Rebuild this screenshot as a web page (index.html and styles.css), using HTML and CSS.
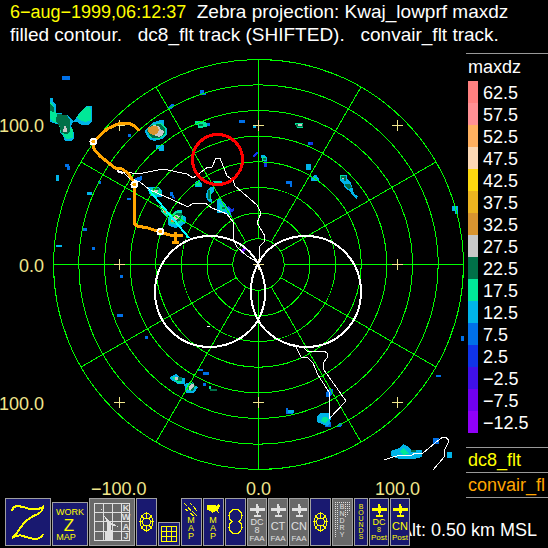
FILE: index.html
```html
<!DOCTYPE html>
<html lang="en">
<head>
  <meta charset="UTF-8">
  <title>Zebra projection</title>
  <link rel="stylesheet" href="styles.css">
</head>
<body>
  <header class="title">
    <p><time class="date">6−aug−1999,06:12:37</time>  Zebra projection: Kwaj_lowprf maxdz</p>
    <p>filled contour.   dc8_flt track (SHIFTED).   convair_flt track.</p>
  </header>

  <main class="display">
    <svg class="plot" viewBox="0 46 466 452">
      <!-- radar echoes -->
      <g class="echo">
        <path class="c7" d="M62 76h8v4h-8z M168 107l3-3h3v3l-3 2h-3z M128 134h3v3h-3z M65 164h4v2h1v4h-3v-3h-2z M98 181h3v3h-3z M127 198h4v2h-4z M82 228h5v3h-5z M92 247h3v3h-3z M135 178l3-1 4-1v3l-3 3-4 1z M170 192h3v3h1v3h-2v-2h-2z M200 90h4v3h2v2h-6z M239 120h6v3h-6z M205 123h5v3h-5z M308 142h5v3h-5z M286 181h6v6h-2v-3h-4z M461 336h3v5h-3z M436 375h5v2h-5z M433 438h6v6h-6z M145 336h3v3h-3z M198 369h5v2h-5z M203 372h6v3h-6z M203 383h3v3h-3z M120 275h3v3h-3z M117 314h6v3h-6z M337 425l3-2h2v3l-2 1h-3z M326 393l3-4h4v4l-4 4h-3z M286 408h2v3h5v3h-7z M311 177h3v-2h3v3h2v3h-8z M327 422h4v5h-6v-3z"/>
        <path class="c2" d="M253 156l2-3 4-2v2l-4 3-1 2z M264 159h3v8h-3z M310 142h3v3h-3z M228 206l3 3 3-1v3l-3 1 1 5-3-2z M174 197h1v2h-1z"/>
        <path class="c12" d="M50 98h3v4l3 2v9h6v3l5-1 4 4 2 2 3-3 4-6 6-6h6v16l-4 3h-6l-5-3h-4l-2 4 3 7v5l-2 3h-7l-2-5-3-4v-7l-10-3z M145 131l4-5 5-4 7-2h3v6l3 2v7l-5 4-8 2-5-2-3-5z M156 145h8v6h-5v-2h-3z M56 175h3v6h-3z M87 192h5v3h-5z M56 245h6v2h-6z M253 125h3v3h-3z M148 187h10l4 4v6h-8l-5-3z M168 217l4-3 6-4h4v5l4 2v6l-5 3-6 2-7-3z M195 182l4-2 3 4v3h-7z M213 181h9v4h-6z M207 190l3-3h4v4l-3 4 1 8-3-1-3-5z M217 199h3l6 6 4 5 1 6-5-3h-9z M261 155h3l3 3v3h-5z M306 164h5v6h-5z M311 178l4-3 4 3v3h-8z M341 175h6v4l4 4 2 6 1 5 4 2-1 3-5-4-1-3-6-4-2-5-3-2z M452 206h6v8h-3v-3h-3z M447 452h5v6h-5z M391 451l8-3 4-4 4 2 4 4h11v7l-8 2h-15l-8-3z M170 377l6-3 4 4h5v6h-7l-8-5z M184 384l6-2 3 2 5 3-2 3-2 3h-8z M317 417l3-4h9l2 4-1 6-3 3-10-4z M288 410h6v3h-6z"/>
        <path class="c17" d="M50 102l3 2 2 8 5 5v7l-7-2-3-4z M77 117l6-8 6-3 2 4v10l-6 2-6-2z M59 122l14 7v9l-7 1-6-8z M195 121h8l4 2v4l-9 1v-3h-3z M147 130l5-6 9-1 5 5v7l-7 4-9-1z M151 188h9l1 6-7 1z M159 205l5 3 4 6-1 4-5-5z M169 217l6-6h6l2 5v5l-6 4-8-2z M295 123h8v5h-6v-3h-2z M196 183h4v3h-4z M214 181h6v2h-6z M208 194l3-4v11l-3-3z M262 157h4v4h-4z M340 175h4v4h-4z M400 451l3-3 4 3 2 3-6 1z M171 377h5v3h5v3h-4z M187 385l6-3 3 5-5 4-4-1z M323 417h4l2 3-4 3-4-2z M209 386h2v3h-2z M219 203l4 3 1 4-3 1z"/>
        <path class="c22" d="M50 104l4 3v5l-4-1z M57 114l10 1 3 5v11l-3 3-6-1-1-6-4-6z M147 131l4-6 9-1 5 5v5l-6 4h-7z M153 188h6v2h-6z M171 218l6-5h5l-1 7-5 3-5-1z M199 124h4v2h-4z M296 124h7v3h-7z M208 190h2v9h-2z M341 176h5v5h-2v-2h-3z M345 184h5l2 4-4 1-3-3z M177 377h5v4h-5z M188 386l5-3 2 3-2 5-5-1z M210 389h7v2h-7z M263 158h3v2h-3z M160 207h3l3 5h-3z M411 450h5v2h-5z M222 207h3v2h-3z"/>
        <path class="c27" d="M64 126h2v2h1v4h-4v-3h1z M149 128l5-3 6 2 1 3 3 1-1 4-4 2-6-2z M152 190h6v2h-6z M161 207h2l4 7-3-1z M171 219l5-4 4 1-3 4-6 2z M298 124h4v2h-4z M175 377h3v3h-3z M189 387l2-3h3v2l-3 4h-2z M342 178h2v1h-2z"/>
        <path class="c32" d="M148 127l5-1h4l2 4-2 4-4 1-5-3z M171 220h3v2h-3z M164 210h2v3h-2z"/>
        <path class="c-7" d="M241 251l3-4 3 1-3 4-3 1z"/>
      </g>

      <!-- range rings and spokes -->
      <g class="rings">
        <circle cx="258.500" cy="264.500" r="25.700"/>
        <circle cx="258.500" cy="264.500" r="51.400"/>
        <circle cx="258.500" cy="264.500" r="77"/>
        <circle cx="258.500" cy="264.500" r="102.700"/>
        <circle cx="258.500" cy="264.500" r="128.300"/>
        <circle cx="258.500" cy="264.500" r="154"/>
        <circle cx="258.500" cy="264.500" r="179.700"/>
        <circle cx="258.500" cy="264.500" r="205"/>
        <path d="M258.500 59v180M258.500 290v179M53 264.500h180M284 264.500h180"/>
        <path d="M271 242.500L361 87M280.500 251.500L436 162M280.500 277.500L436 367M271 286.500L361 442M246 286.500L156 442M236.500 277.500L81 367M236.500 251.500L81 162M246 242.500L156 87"/>
      </g>

      <g class="marks">
        <path d="M114 125.500h11M119.500 120v11M253 125.500h11M258.500 120v11M392 125.500h11M397.500 120v11"/>
        <path d="M114 264.500h11M119.500 259v11M253 264.500h11M258.500 259v11M392 264.500h11M397.500 259v11"/>
        <path d="M114 402.500h11M119.500 397v11M253 402.500h11M258.500 397v11M392 402.500h11M397.500 397v11"/>
      </g>

      <!-- dc8 track -->
      <g class="dc8">
        <path d="M117 170l3 2 12 1h11l20-4 24 5 6 4 7-5 8-6h4l4-9h4l7 18 6 4 2 6 22 19 4 8-4 10 8 13-1 6-5 5v16"/>
        <path d="M123 172l6 6 11 4 10 8 23 10 15 7 5-4h12l7 5 15 6 6 8v16l4 9 10 9 12 7"/>
        <path d="M294 344l3 5 4 8 7 1 5 5 5 12 11 17v27l17-18-22-31-1-7 4-5v-5l-3-2h-17l-4-4"/>
        <path d="M384 460l6-2 10-3 11 1 4-3h8l12-10 8-6h3l3 4-5 10v6l-11 13M207 326.500h3"/>
        <path class="wide" d="M258 264C249 246 231 236 210 236C179 236 155 261 155 292S179 347 210 347C233 347 251 333 258 320C268 303 267 281 258 264"/>
        <path class="wide" d="M258 264C267 246 285 236 306 236C337 236 361 261 361 292S337 347 306 347C283 347 265 333 258 320C249 303 248 281 258 264"/>
        <path class="wide" d="M117 171l6 2"/>
      </g>
      <path class="shift" d="M149 190L189 238"/>

      <!-- convair track -->
      <g class="convair">
        <path d="M139 131l-3-4-7-4-11 1-11 5-14 13 1 7 6 7 15 12 7 1 6 4 5 8 2 11-1 12v19l3 3 11 2 12 4 10 3 13 1M175.500 232v11M172 242.500h7"/>
        <circle cx="93.500" cy="141.500" r="3"/>
        <circle cx="134.500" cy="184.500" r="3"/>
        <circle cx="160.500" cy="231.500" r="3"/>
      </g>
      <circle class="target" cx="217.500" cy="159.500" r="25"/>

      <g class="axis">
        <text x="-1" y="132">100.0</text>
        <text x="19" y="272">0.0</text>
        <text x="-1" y="410">100.0</text>
        <text x="91" y="495">−100.0</text>
        <text x="246" y="495">0.0</text>
        <text x="375" y="495">100.0</text>
      </g>
    </svg>

    <aside class="legend">
      <h2>maxdz</h2>
      <ul class="scale">
        <li class="s62">62.5</li>
        <li class="s57">57.5</li>
        <li class="s52">52.5</li>
        <li class="s47">47.5</li>
        <li class="s42">42.5</li>
        <li class="s37">37.5</li>
        <li class="s32">32.5</li>
        <li class="s27">27.5</li>
        <li class="s22">22.5</li>
        <li class="s17">17.5</li>
        <li class="s12">12.5</li>
        <li class="s7">7.5</li>
        <li class="s2">2.5</li>
        <li class="s-2">−2.5</li>
        <li class="s-7">−7.5</li>
        <li class="s-12">−12.5</li>
      </ul>
      <p class="track yellow">dc8_flt</p>
      <p class="track orange">convair_fl</p>
    </aside>
  </main>

  <footer class="bottom">
    <nav class="toolbar">
      <button type="button" class="w46" aria-label="Zebra">
        <svg viewBox="0 0 44 46"><path class="bold" d="M6 12Q7 7 12 7Q18 8 24 10Q33 11 37 8Q37 12 32 15Q21 19 15 28Q11 35 6 39Q12 35 17 37Q25 40 31 40Q36 38 37 35"/></svg>
      </button>
      <button type="button" class="w36">
        <svg viewBox="0 0 34 42">
          <text x="17" y="12" class="t9">WORK</text>
          <text x="16" y="28" class="t17">Z</text>
          <text x="13" y="37" class="t9">MAP</text>
        </svg>
      </button>
      <button type="button" class="w46 gray">
        <svg viewBox="0 0 44 46">
          <path d="M4.500 4.500h35v37h-35zM13.500 4v37M22.500 4v37M31.500 4v37M4 13.500h35M4 22.500h35M4 32.500h35"/>
          <path class="fill" d="M12 4l-1 5 3 7 5 6 10 6-8-2v5l2 2v8h-8v-8l2-2v-8l-4-8-2-6z"/>
          <text x="36" y="12" class="t9 b">K</text>
          <text x="36" y="21" class="t9 b">W</text>
          <text x="36" y="31" class="t9 b">A</text>
          <text x="36" y="40" class="t9 b">J</text>
        </svg>
      </button>
      <button type="button" class="w21" aria-label="Radar rings">
        <svg viewBox="0 0 19 46"><ellipse cx="9.500" cy="23" rx="6.500" ry="8.500"/><circle cx="9.500" cy="23" r="4"/><path d="M9.500 13v6M9.500 27v6M2 22.500h4M13 22.500h4M4 16l3 4M15 16l-3 4M4 30l3-4M15 30l-3-4"/></svg>
      </button>
      <button type="button" class="w22" aria-label="Grid">
        <svg viewBox="0 0 20 22"><path d="M2.500 3.500h15v15h-15zM7.500 3v15M12.500 3v15M2 8.500h15M2 13.500h15"/></svg>
      </button>
      <button type="button" class="w21">
        <svg viewBox="0 0 19 46">
          <path d="M2 4l3 3M6 8l3 4M10 12l5 5M8 4l2 2M11 7l4 5M3 10l3 2M8 14l4 3"/>
          <text x="9" y="24" class="t9">M</text>
          <text x="9" y="32" class="t9">A</text>
          <text x="9" y="40" class="t9">P</text>
        </svg>
      </button>
      <button type="button" class="w21">
        <svg viewBox="0 0 19 46">
          <path class="fill" d="M3 6h8l1 1 3-2 1 2-2 4 1 3-3-2-3 1-1 1-2-2-3-1z"/>
          <text x="9" y="24" class="t9">M</text>
          <text x="9" y="32" class="t9">A</text>
          <text x="9" y="40" class="t9">P</text>
        </svg>
      </button>
      <button type="button" class="w21" aria-label="Figure eight">
        <svg viewBox="0 0 19 46"><path d="M7 10.500h5l3 3 1 3-1 4-2 2 2 2 1 4-1 3-3 3h-5l-3-3-1-3 1-4 2-2-2-2-1-4 1-3z"/></svg>
      </button>
      <button type="button" class="w20 gray">
        <svg viewBox="0 0 18 46">
          <path class="fill" d="M8 5h2l1 4h6v3h-6l-1 4h3v2H6v-2h3l-1-4H2V9h6z"/>
          <text x="9" y="26" class="t9">DC</text>
          <text x="9" y="34" class="t9">8</text>
          <text x="9" y="42" class="t8">FAA</text>
        </svg>
      </button>
      <button type="button" class="w20 gray">
        <svg viewBox="0 0 18 46">
          <path class="fill" d="M8 5h2l1 4h6v3h-6l-1 4h3v2H6v-2h3l-1-4H2V9h6z"/>
          <text x="9" y="31" class="t11">CT</text>
          <text x="9" y="42" class="t8">FAA</text>
        </svg>
      </button>
      <button type="button" class="w20 gray">
        <svg viewBox="0 0 18 46">
          <path class="fill" d="M8 5h2l1 4h6v3h-6l-1 4h3v2H6v-2h3l-1-4H2V9h6z"/>
          <text x="9" y="31" class="t11">CN</text>
          <text x="9" y="42" class="t8">FAA</text>
        </svg>
      </button>
      <button type="button" class="w21" aria-label="Radar rings overlay">
        <svg viewBox="0 0 19 46"><ellipse cx="9.500" cy="23" rx="6.500" ry="8.500"/><circle cx="9.500" cy="23" r="4"/><path d="M9.500 13v6M9.500 27v6M2 22.500h4M13 22.500h4M4 16l3 4M15 16l-3 4M4 30l3-4M15 30l-3-4"/></svg>
      </button>
      <button type="button" class="w21 gray">
        <svg viewBox="0 0 19 46">
          <path class="dots" d="M2 3.500h16M2 5.500h4M12 5.500h6M2 7.500h4M12 7.500h6M2 9.500h4M12 9.500h5M2 11.500h4M12 11.500h5M2 13.500h4M12 13.500h4M2 15.500h4M12 15.500h3M2 17.500h4M12 17.500h2M2 19.500h4M2 21.500h4M2 23.500h4M2 25.500h3M2 27.500h3M2 29.500h3M2 31.500h2M2 33.500h2M2 35.500h2M2 37.500h1"/>
          <text x="9" y="10" class="t7">B</text>
          <text x="9" y="17" class="t7">N</text>
          <text x="9" y="24" class="t7">D</text>
          <text x="9" y="31" class="t7">R</text>
          <text x="9" y="38" class="t7">Y</text>
        </svg>
      </button>
      <button type="button" class="w14">
        <svg viewBox="0 0 12 46">
          <text x="6" y="10" class="t7">B</text>
          <text x="6" y="16" class="t7">O</text>
          <text x="6" y="22" class="t7">U</text>
          <text x="6" y="28" class="t7">N</text>
          <text x="6" y="34" class="t7">D</text>
          <text x="6" y="40" class="t7">S</text>
        </svg>
      </button>
      <button type="button" class="w20">
        <svg viewBox="0 0 18 46">
          <path class="fill" d="M8 5h2l1 4h6v3h-6l-1 4h3v2H6v-2h3l-1-4H2V9h6z"/>
          <text x="9" y="26" class="t9">DC</text>
          <text x="9" y="33" class="t7">8</text>
          <text x="9" y="41" class="t8">Post</text>
        </svg>
      </button>
      <button type="button" class="w20">
        <svg viewBox="0 0 18 46">
          <path class="fill" d="M8 5h2l1 4h6v3h-6l-1 4h3v2H6v-2h3l-1-4H2V9h6z"/>
          <text x="9" y="31" class="t11">CN</text>
          <text x="9" y="41" class="t8">Post</text>
        </svg>
      </button>
    </nav>
    <p class="alt">Alt: 0.50 km MSL</p>
  </footer>
</body>
</html>
```

FILE: styles.css
```css
body {
  margin: 0;
  background: #000;
  color: #fff;
  font-family: "Liberation Sans", Arial, sans-serif;
  font-size: 18px;
  overflow-x: hidden;
}

p, h2, ul {
  margin: 0;
  padding: 0;
}

.title {
  display: flex;
  flex-direction: column;
  padding: 0 10px;
  font-size: 19px;
  line-height: 23px;
  white-space: pre-wrap;
}

.date {
  font-size: 18px;
  line-height: 1;
}

.date, .yellow {
  color: #ffff00;
}

.orange {
  color: #ffa500;
}

.display {
  display: grid;
  grid-template-columns: 1fr 82px;
  align-items: start;
}

/* plot */
.plot {
  display: block;
  width: 100%;
  shape-rendering: crispEdges;
}

.rings circle, .rings path, .marks path, .dc8 path, .shift, .convair path, .target {
  fill: none;
}

.rings {
  stroke: #00ff00;
}

.marks {
  stroke: #f0e68c;
}

.dc8 {
  stroke: #fff;
}

.dc8 .wide {
  stroke-width: 2px;
}

.shift {
  stroke: #00ffff;
  stroke-width: 2px;
}

.convair {
  stroke: #ffa500;
  stroke-width: 3px;
}

.convair circle {
  fill: #ffa500;
  stroke: #fff;
  stroke-width: 2px;
}

.target {
  stroke: #ff0000;
  stroke-width: 3px;
}

.axis {
  fill: #f0e68c;
}

.c32 { fill: #d89430; }
.c27 { fill: #c8c8c8; }
.c22 { fill: #007048; }
.c17 { fill: #00e898; }
.c12 { fill: #00b4e8; }
.c7 { fill: #0070e8; }
.c2 { fill: #1034e8; }
.c-7 { fill: #7000f0; }

/* legend */
.legend {
  margin-top: 7px;
  border-top: 1px solid #999;
  overflow: hidden;
}

.legend h2 {
  padding-left: 2px;
  font-size: 18px;
  font-weight: normal;
  line-height: 27px;
}

.scale {
  list-style: none;
  margin: 0 2px 14px;
}

.scale li {
  box-sizing: border-box;
  height: 22px;
  padding-top: 2px;
  padding-left: 5px;
  border-left-width: 10px;
  border-left-style: solid;
  line-height: 20px;
}

.s62 { border-color: #ff8080; }
.s57 { border-color: #ff9094; }
.s52 { border-color: #ffb060; }
.s47 { border-color: #fcd8b4; }
.s42 { border-color: #fcd810; }
.s37 { border-color: #ecb420; }
.s32 { border-color: #d89430; }
.s27 { border-color: #c8c8c8; }
.s22 { border-color: #007048; }
.s17 { border-color: #00e898; }
.s12 { border-color: #00b4e8; }
.s7 { border-color: #0070e8; }
.s2 { border-color: #1034e8; }
.s-2 { border-color: #4010e8; }
.s-7 { border-color: #7000f0; }
.s-12 { border-color: #9000f8; }

.track {
  padding-left: 2px;
  border-top: 1px solid #999;
  line-height: 24px;
  white-space: nowrap;
}

.track:last-child {
  border-bottom: 1px solid #999;
}

/* bottom bar */
.bottom {
  display: flex;
  align-items: flex-end;
  padding-left: 5px;
}

.toolbar {
  display: flex;
  align-items: flex-end;
  gap: 1px;
  position: relative;
  z-index: 1;
}

.toolbar button {
  box-sizing: border-box;
  flex: none;
  padding: 0;
  border: 1px solid #a0a0a0;
  background: #191970;
  color: #ffff00;
  font-family: inherit;
  cursor: pointer;
}

.toolbar .gray {
  background: #696969;
  color: #e0e0e0;
}

.toolbar svg {
  display: block;
  width: 100%;
  fill: none;
  stroke: currentColor;
  shape-rendering: crispEdges;
}

.toolbar text {
  fill: currentColor;
  stroke: none;
  text-anchor: middle;
}

.toolbar .fill {
  fill: currentColor;
  stroke: none;
}

.toolbar .bold {
  stroke-width: 2px;
}

.toolbar .dots {
  stroke-dasharray: 1 1;
}

.w14 { width: 14px; }
.w20 { width: 20px; }
.w21 { width: 21px; }
.w22 { width: 22px; }
.w36 { width: 36px; }
.w46 { width: 46px; }

.t7 { font-size: 7px; }
.t8 { font-size: 8px; }
.t9 { font-size: 9px; }
.t11 { font-size: 11px; }
.t17 { font-size: 17px; }
.b { font-weight: bold; }

.alt {
  margin-left: -10px;
  padding-bottom: 4px;
  line-height: 23px;
  white-space: nowrap;
}
```
